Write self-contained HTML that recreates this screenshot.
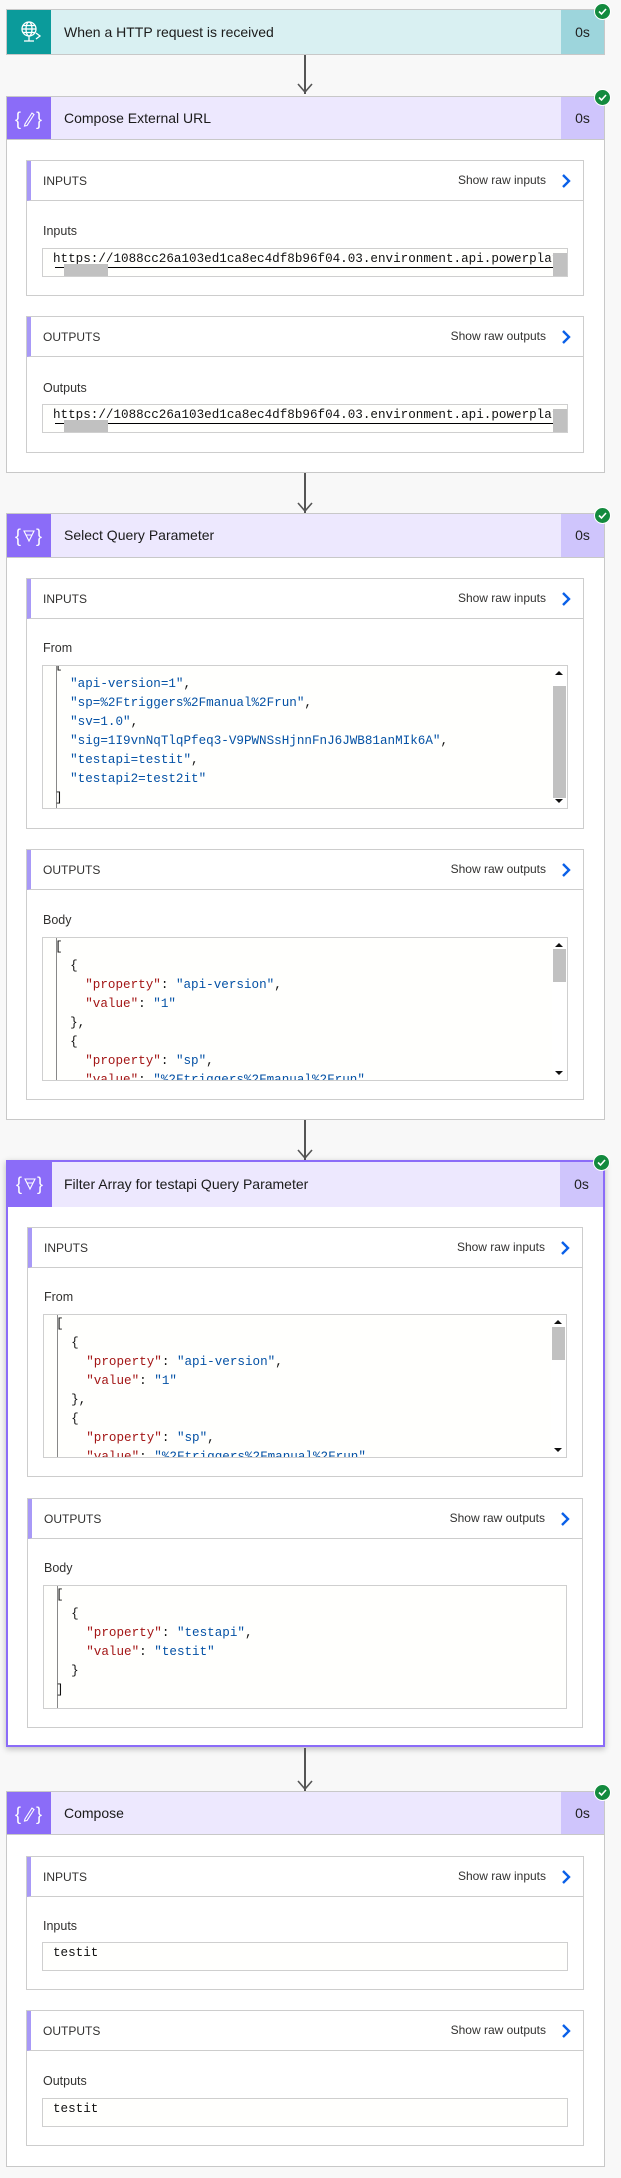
<!DOCTYPE html>
<html><head><meta charset="utf-8"><style>
*{margin:0;padding:0;box-sizing:border-box}
body{width:621px;height:2178px;background:#f8f8f8;position:relative;overflow:hidden;font-family:"Liberation Sans",sans-serif;color:#222}
.a{position:absolute}
.card{position:absolute;left:6px;width:599px;border:1px solid #c8c8c8;background:#fff}
.hdr{position:absolute;left:6px;width:599px;height:44px;background:#ede8fe;border:1px solid #c8c8c8}
.ico{position:absolute;left:0;top:0;width:44px;height:100%;background:#8b6cf8}
.ttl{position:absolute;left:57px;top:0;line-height:42px;font-size:14px;color:#1b1b1b}
.dur{position:absolute;right:0;top:0;width:43px;height:100%;background:#cfc5fc;text-align:center;line-height:42px;font-size:14px}
.chk{position:absolute;width:17px;height:17px;border-radius:50%;background:#138a3e;border:1.5px solid #fff}
.chk svg{position:absolute;left:3px;top:3px}
.panel{position:absolute;left:26px;width:558px;border:1px solid #cdcdcd;background:#fff}
.ph{position:absolute;left:0;top:0;width:100%;height:40px;border-bottom:1px solid #cdcdcd;border-left:4px solid #a899f7}
.ph .t{position:absolute;left:12px;top:13px;font-size:12px;color:#323130}
.ph .r{position:absolute;right:37px;top:12px;font-size:12px;color:#323130}
.ph svg{position:absolute;right:12px;top:12px}
.lbl{position:absolute;left:43px;font-size:12.5px;color:#323130}
.box{position:absolute;left:42px;width:526px;border:1px solid #cfcfcf;background:#fffffd;overflow:hidden}
pre{font-family:"Liberation Mono",monospace;font-size:12.6px;line-height:19px;color:#111}
.s{color:#0451a5}.k{color:#a31515}
.vs{position:absolute;right:0;top:0;width:15px;height:100%;background:#fff}
.th{position:absolute;left:1px;width:13px;background:#c1c1c1}
.up,.dn{position:absolute;left:3px;width:0;height:0;border-left:4px solid transparent;border-right:4px solid transparent}
.up{top:5px;border-bottom:4px solid #111}
.dn{bottom:5px;border-top:4px solid #111}
.guide{position:absolute;left:13px;width:1px;background:#888}
.arrow{position:absolute;left:304px;width:2px;background:#555}
</style></head><body>

<!-- Trigger -->
<div class="hdr" style="top:9px;height:46px;background:#d9f0f2">
 <div class="ico" style="background:#0b9b9b">
  <svg width="44" height="44" viewBox="0 0 44 44"><g fill="none" stroke="#fff" stroke-width="1.3"><circle cx="22" cy="19" r="7"/><ellipse cx="22" cy="19" rx="3" ry="7"/><line x1="15" y1="19" x2="29" y2="19"/><line x1="16" y1="15.5" x2="28" y2="15.5"/><line x1="16" y1="22.5" x2="28" y2="22.5"/><line x1="22" y1="26" x2="22" y2="31"/><line x1="17" y1="31" x2="27" y2="31"/><path d="M29 23 L33 26 L29 29"/></g></svg>
 </div>
 <div class="ttl" style="line-height:44px">When a HTTP request is received</div>
 <div class="dur" style="background:#9dd5dc;line-height:44px">0s</div>
</div>
<div class="chk" style="left:594px;top:3px"><svg width="9" height="9" viewBox="0 0 9 9"><path d="M1 4.5 L3.5 7 L8 2" stroke="#fff" stroke-width="1.6" fill="none"/></svg></div>
<div class="arrow" style="top:55px;height:39px"></div>
<svg class="a" style="left:297px;top:83px" width="16" height="12"><path d="M1 1 L8 9 L15 1" stroke="#555" stroke-width="1.6" fill="none"/></svg>

<!-- Compose External URL -->
<div class="card" style="top:96px;height:377px"></div>
<div class="hdr" style="top:96px">
 <div class="ico"><svg width="44" height="44" viewBox="0 0 44 44"><text x="8" y="28" fill="#fff" font-size="18" font-family="Liberation Sans">{</text><text x="29" y="28" fill="#fff" font-size="18" font-family="Liberation Sans">}</text><path d="M18 27 L25 16 L27 17.5 L20 28.5 L17.5 29 Z" stroke="#fff" stroke-width="1.1" fill="none"/></svg></div>
 <div class="ttl">Compose External URL</div><div class="dur">0s</div>
</div>
<div class="chk" style="left:594px;top:89px"><svg width="9" height="9" viewBox="0 0 9 9"><path d="M1 4.5 L3.5 7 L8 2" stroke="#fff" stroke-width="1.6" fill="none"/></svg></div>

<div class="panel" style="top:160px;height:136px"><div class="ph"><span class="t">INPUTS</span><span class="r">Show raw inputs</span><svg width="10" height="16"><path d="M2 2 L8 8 L2 14" stroke="#0a60e8" stroke-width="2.4" fill="none"/></svg></div></div>
<div class="lbl" style="top:224px">Inputs</div>
<div class="box" style="top:248px;height:29px"><pre style="position:absolute;left:10px;top:1px;white-space:pre">https://1088cc26a103ed1ca8ec4df8b96f04.03.environment.api.powerplat</pre>
 <div class="a" style="left:12px;top:18px;width:512px;height:1px;background:#000"></div>
 <div class="a" style="left:21px;top:15px;width:44px;height:12px;background:#c1c1c1"></div>
 <div class="a" style="left:510px;top:4px;width:14px;height:24px;background:#c1c1c1"></div>
</div>

<div class="panel" style="top:316px;height:137px"><div class="ph"><span class="t">OUTPUTS</span><span class="r">Show raw outputs</span><svg width="10" height="16"><path d="M2 2 L8 8 L2 14" stroke="#0a60e8" stroke-width="2.4" fill="none"/></svg></div></div>
<div class="lbl" style="top:381px">Outputs</div>
<div class="box" style="top:404px;height:29px"><pre style="position:absolute;left:10px;top:1px;white-space:pre">https://1088cc26a103ed1ca8ec4df8b96f04.03.environment.api.powerplat</pre>
 <div class="a" style="left:12px;top:18px;width:512px;height:1px;background:#000"></div>
 <div class="a" style="left:21px;top:15px;width:44px;height:12px;background:#c1c1c1"></div>
 <div class="a" style="left:510px;top:4px;width:14px;height:24px;background:#c1c1c1"></div>
</div>
<div class="arrow" style="top:473px;height:40px"></div>
<svg class="a" style="left:297px;top:502px" width="16" height="12"><path d="M1 1 L8 9 L15 1" stroke="#555" stroke-width="1.6" fill="none"/></svg>

<!-- Select -->
<div class="card" style="top:513px;height:607px"></div>
<div class="hdr" style="top:513px;height:45px">
 <div class="ico"><svg width="44" height="44" viewBox="0 0 44 44"><text x="8" y="28" fill="#fff" font-size="18" font-family="Liberation Sans">{</text><text x="29" y="28" fill="#fff" font-size="18" font-family="Liberation Sans">}</text><path d="M17 17 L27 17 L22 27 Z M19.5 21 L24.5 21" stroke="#fff" stroke-width="1.1" fill="none"/></svg></div>
 <div class="ttl">Select Query Parameter</div><div class="dur">0s</div>
</div>
<div class="chk" style="left:594px;top:507px"><svg width="9" height="9" viewBox="0 0 9 9"><path d="M1 4.5 L3.5 7 L8 2" stroke="#fff" stroke-width="1.6" fill="none"/></svg></div>

<div class="panel" style="top:578px;height:251px"><div class="ph"><span class="t">INPUTS</span><span class="r">Show raw inputs</span><svg width="10" height="16"><path d="M2 2 L8 8 L2 14" stroke="#0a60e8" stroke-width="2.4" fill="none"/></svg></div></div>
<div class="lbl" style="top:641px">From</div>
<div class="box" style="top:665px;height:144px"><div class="guide" style="top:0;height:142px"></div>
<pre style="position:absolute;left:12px;top:-10px">[
  <span class="s">"api-version=1"</span>,
  <span class="s">"sp=%2Ftriggers%2Fmanual%2Frun"</span>,
  <span class="s">"sv=1.0"</span>,
  <span class="s">"sig=1I9vnNqTlqPfeq3-V9PWNSsHjnnFnJ6JWB81anMIk6A"</span>,
  <span class="s">"testapi=testit"</span>,
  <span class="s">"testapi2=test2it"</span>
]</pre>
<div class="vs"><div class="up"></div><div class="th" style="top:20px;height:112px"></div><div class="dn"></div></div></div>

<div class="panel" style="top:849px;height:251px"><div class="ph"><span class="t">OUTPUTS</span><span class="r">Show raw outputs</span><svg width="10" height="16"><path d="M2 2 L8 8 L2 14" stroke="#0a60e8" stroke-width="2.4" fill="none"/></svg></div></div>
<div class="lbl" style="top:913px">Body</div>
<div class="box" style="top:937px;height:144px"><div class="guide" style="top:0;height:142px"></div>
<pre style="position:absolute;left:12px;top:0">[
  {
    <span class="k">"property"</span>: <span class="s">"api-version"</span>,
    <span class="k">"value"</span>: <span class="s">"1"</span>
  },
  {
    <span class="k">"property"</span>: <span class="s">"sp"</span>,
    <span class="k">"value"</span>: <span class="s">"%2Ftriggers%2Fmanual%2Frun"</span></pre>
<div class="vs"><div class="up"></div><div class="th" style="top:11px;height:33px"></div><div class="dn"></div></div></div>
<div class="arrow" style="top:1120px;height:40px"></div>
<svg class="a" style="left:297px;top:1149px" width="16" height="12"><path d="M1 1 L8 9 L15 1" stroke="#555" stroke-width="1.6" fill="none"/></svg>

<!-- Filter -->
<div class="card" style="top:1160px;height:587px;border:2px solid #8b6cf8;box-shadow:0 2px 6px rgba(0,0,0,.25)"></div>
<div class="hdr" style="top:1160px;height:47px;border:2px solid #8b6cf8;border-bottom:none">
 <div class="ico"><svg width="44" height="44" viewBox="0 0 44 44"><text x="8" y="28" fill="#fff" font-size="18" font-family="Liberation Sans">{</text><text x="29" y="28" fill="#fff" font-size="18" font-family="Liberation Sans">}</text><path d="M17 17 L27 17 L22 27 Z M19.5 21 L24.5 21" stroke="#fff" stroke-width="1.1" fill="none"/></svg></div>
 <div class="ttl" style="left:56px;line-height:44px">Filter Array for testapi Query Parameter</div><div class="dur" style="line-height:44px">0s</div>
</div>
<div class="chk" style="left:593px;top:1154px"><svg width="9" height="9" viewBox="0 0 9 9"><path d="M1 4.5 L3.5 7 L8 2" stroke="#fff" stroke-width="1.6" fill="none"/></svg></div>

<div class="panel" style="top:1227px;height:250px;left:27px;width:556px"><div class="ph"><span class="t">INPUTS</span><span class="r">Show raw inputs</span><svg width="10" height="16"><path d="M2 2 L8 8 L2 14" stroke="#0a60e8" stroke-width="2.4" fill="none"/></svg></div></div>
<div class="lbl" style="top:1290px;left:44px">From</div>
<div class="box" style="top:1314px;height:144px;left:43px;width:524px"><div class="guide" style="top:0;height:142px"></div>
<pre style="position:absolute;left:12px;top:0">[
  {
    <span class="k">"property"</span>: <span class="s">"api-version"</span>,
    <span class="k">"value"</span>: <span class="s">"1"</span>
  },
  {
    <span class="k">"property"</span>: <span class="s">"sp"</span>,
    <span class="k">"value"</span>: <span class="s">"%2Ftriggers%2Fmanual%2Frun"</span></pre>
<div class="vs"><div class="up"></div><div class="th" style="top:12px;height:33px"></div><div class="dn"></div></div></div>

<div class="panel" style="top:1498px;height:230px;left:27px;width:556px"><div class="ph"><span class="t">OUTPUTS</span><span class="r">Show raw outputs</span><svg width="10" height="16"><path d="M2 2 L8 8 L2 14" stroke="#0a60e8" stroke-width="2.4" fill="none"/></svg></div></div>
<div class="lbl" style="top:1561px;left:44px">Body</div>
<div class="box" style="top:1585px;height:124px;left:43px;width:524px"><div class="guide" style="top:0;height:122px"></div>
<pre style="position:absolute;left:12px;top:0">[
  {
    <span class="k">"property"</span>: <span class="s">"testapi"</span>,
    <span class="k">"value"</span>: <span class="s">"testit"</span>
  }
]</pre></div>
<div class="arrow" style="top:1748px;height:43px"></div>
<svg class="a" style="left:297px;top:1780px" width="16" height="12"><path d="M1 1 L8 9 L15 1" stroke="#555" stroke-width="1.6" fill="none"/></svg>

<!-- Compose -->
<div class="card" style="top:1791px;height:376px"></div>
<div class="hdr" style="top:1791px">
 <div class="ico"><svg width="44" height="44" viewBox="0 0 44 44"><text x="8" y="28" fill="#fff" font-size="18" font-family="Liberation Sans">{</text><text x="29" y="28" fill="#fff" font-size="18" font-family="Liberation Sans">}</text><path d="M18 27 L25 16 L27 17.5 L20 28.5 L17.5 29 Z" stroke="#fff" stroke-width="1.1" fill="none"/></svg></div>
 <div class="ttl">Compose</div><div class="dur">0s</div>
</div>
<div class="chk" style="left:594px;top:1784px"><svg width="9" height="9" viewBox="0 0 9 9"><path d="M1 4.5 L3.5 7 L8 2" stroke="#fff" stroke-width="1.6" fill="none"/></svg></div>

<div class="panel" style="top:1856px;height:134px"><div class="ph"><span class="t">INPUTS</span><span class="r">Show raw inputs</span><svg width="10" height="16"><path d="M2 2 L8 8 L2 14" stroke="#0a60e8" stroke-width="2.4" fill="none"/></svg></div></div>
<div class="lbl" style="top:1919px">Inputs</div>
<div class="box" style="top:1942px;height:29px"><pre style="position:absolute;left:10px;top:1px">testit</pre></div>

<div class="panel" style="top:2010px;height:136px"><div class="ph"><span class="t">OUTPUTS</span><span class="r">Show raw outputs</span><svg width="10" height="16"><path d="M2 2 L8 8 L2 14" stroke="#0a60e8" stroke-width="2.4" fill="none"/></svg></div></div>
<div class="lbl" style="top:2074px">Outputs</div>
<div class="box" style="top:2098px;height:29px"><pre style="position:absolute;left:10px;top:1px">testit</pre></div>

</body></html>
